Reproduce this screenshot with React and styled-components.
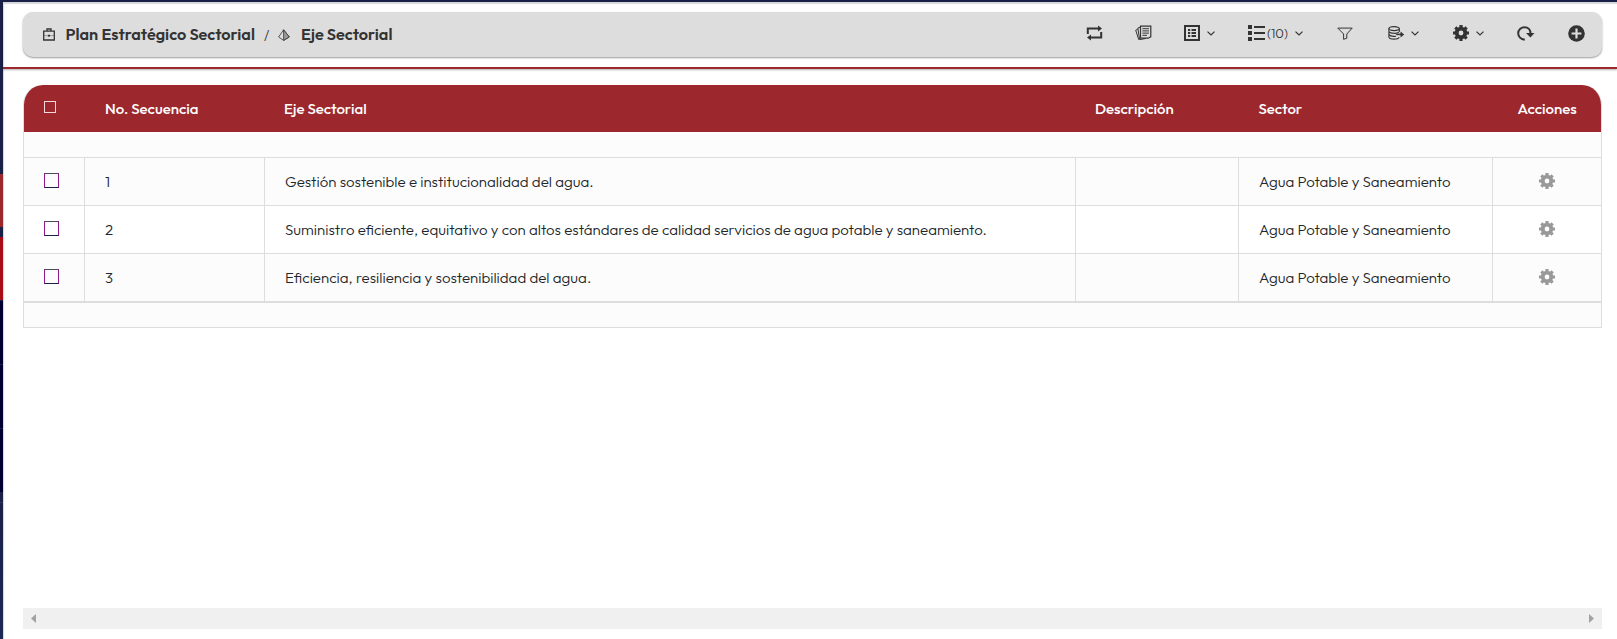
import React from "react";
import styled, { createGlobalStyle } from "styled-components";

const GlobalStyle = createGlobalStyle`
  *, *::before, *::after { box-sizing: border-box; }
  html, body { margin: 0; background: #fff; }
  body {
    font-family: Outfit, Lato, "Open Sans", sans-serif;
    font-size: 15px;
    font-weight: 300;
    color: #212529;
    overflow: hidden;
  }
`;

const Page = styled.div`
  display: grid;
  grid-template-columns: 3px 1fr;
  height: 639px;
`;

const Rail = styled.aside`
  display: flex;
  flex-direction: column;
`;

const RailBlock = styled.div`
  height: ${(p) => p.$height}px;
  background: ${(p) => p.$fill};
  border-bottom: ${(p) => (p.$line ? `1px solid ${p.$line}` : "none")};
`;

const Main = styled.main`
  display: flex;
  flex-direction: column;
  min-width: 0;
  border-top: 2px solid #1a2149;
  box-shadow: inset 1px 2px 1px #d6d6dc;
`;

const Header = styled.header`
  height: 67px;
  padding: 10px 15px 0 20px;
  border-bottom: 2px solid #9c272d;
  box-shadow: 0 1px 2px rgba(0, 0, 0, 0.3);
`;

const Toolbar = styled.div`
  display: flex;
  align-items: center;
  justify-content: space-between;
  height: 45px;
  padding: 0 17px 0 20px;
  border-radius: 10px;
  background: #ddd;
  box-shadow: 0 1px 2px rgba(0, 0, 0, 0.4);
`;

const Breadcrumb = styled.nav`
  display: flex;
  align-items: center;
  height: 45px;
  color: #333;
`;

const Crumb = styled.span`
  margin-left: ${(p) => p.$gap}px;
  padding-bottom: 2px;
  font-size: 16.25px;
  font-weight: 600;
  white-space: nowrap;
`;

const Slash = styled.span`
  width: 14px;
  margin-left: 9px;
  font-size: 14px;
  font-weight: 300;
`;

const Tools = styled.div`
  display: flex;
  align-items: center;
  height: 42px;
  align-self: flex-start;
`;

const Tool = styled.button`
  display: flex;
  align-items: center;
  height: 20px;
  margin: 0 0 0 ${(p) => p.$gap || 0}px;
  padding: 0;
  border: 0;
  background: none;
  color: #333;
  font: 300 13px Outfit, Lato, sans-serif;
`;

const Count = styled.span`
  width: 28px;
  padding-left: 2px;
  text-align: left;
`;

const Icon = styled.svg`
  display: block;
  flex: none;
  fill: none;
  stroke: currentColor;
`;

const Content = styled.section`
  display: flex;
  flex: 1;
  flex-direction: column;
  justify-content: space-between;
  padding: 16px 15px 10px 20px;
`;

const Table = styled.div`
  overflow: hidden;
  border: 1px solid #ddd;
  border-top: 0;
  border-radius: 20px 20px 0 0;
`;

const columns = "61px 180px 811px 163px 254px 1fr";

const HeadRow = styled.div`
  display: grid;
  grid-template-columns: ${columns};
  align-items: center;
  height: 48px;
  background: #9c272d;
  border-bottom: 1px solid #fff;
  color: #fff;
`;

const HeadCell = styled.div`
  padding-left: ${(p) => p.$pad ?? 20}px;
  font-weight: 500;
`;

const Spacer = styled.div`
  height: 24px;
  background: #fcfcfc;
`;

const Row = styled.div`
  display: grid;
  grid-template-columns: ${columns};
  height: 48px;
  border-top: 1px solid #ddd;
  background: ${(p) => (p.$striped ? "#fcfcfc" : "#fff")};
`;

const Cell = styled.div`
  display: flex;
  align-items: center;
  padding-left: 20px;
  border-right: 1px solid #ddd;
  font-size: 15.05px;
  white-space: nowrap;
  &:last-child {
    justify-content: center;
    padding: 0;
    border-right: 0;
  }
`;

const Footer = styled.div`
  height: 26px;
  border-top: 2px solid #ddd;
  background: #fcfcfc;
`;

const Check = styled.span`
  display: block;
  width: 15px;
  height: 15px;
  margin-top: -2px;
  border: 1px solid #8a1a8e;
  border-top-color: #4a4a58;
  border-bottom-color: #1a2149;
`;

const HeadCheck = styled.span`
  display: block;
  width: 12px;
  height: 12px;
  margin-top: -3px;
  border: 1px solid #f5d8dc;
`;

const ScrollBar = styled.div`
  display: flex;
  align-items: center;
  justify-content: space-between;
  height: 21px;
  padding: 0 8px;
  background: #f0f0f0;
  color: #a3a3a3;
`;

const Briefcase = () => (
  <Icon width="12" height="13" viewBox="0 0 12 13" strokeWidth="1.3">
    <path d="M.7 3.2H11.3V12H.7ZM4 3V1H8V3" />
    <path d="M1 7.6H4.5M7.5 7.6H11" strokeWidth=".4" />
    <rect x="4.8" y="6.8" width="2.4" height="1.8" fill="currentColor" stroke="none" />
  </Icon>
);

const Pyramid = () => (
  <Icon width="12" height="12" viewBox="0 0 12 12" strokeWidth="0.8" strokeLinejoin="round">
    <path d="M5.6.8.6 8 5.6 11.4 11.3 8Z" />
    <path d="M5.6.8V11.4L11.3 8Z" fill="#999" />
  </Icon>
);

const Swap = () => (
  <Icon width="17" height="16" viewBox="0 0 17 16" strokeWidth="2">
    <path d="M1.8 9V3.4H12.5M15.2 7V12.4H4.5" />
    <path d="M12 .4 16 3.4 12 6.4ZM5 9.4 1 12.4 5 15.4Z" fill="currentColor" stroke="none" />
  </Icon>
);

const Papers = () => (
  <Icon width="17" height="16" viewBox="0 0 17 16" strokeWidth="1">
    <path d="M5.5 1.2H15.8V11.8L13 13.2H5.5Z" strokeWidth="1.2" />
    <path d="M7.4 3.7H14M7.4 5.9H14M7.4 8.1H14M7.4 10.3H12" />
    <path d="M5 2.3 2.8 3 4.6 14.6 10.8 13.5M2.7 4.4.7 5.2 3.8 14.8" />
  </Icon>
);

const ListBox = () => (
  <Icon width="16" height="16" viewBox="0 0 16 16" strokeWidth="2">
    <rect x="1" y="1" width="14" height="14" />
    <path d="M4 5H6.2M7.5 5H12M4 8H6.2M7.5 8H12M4 11H6.2M7.5 11H12" strokeWidth="1.9" />
  </Icon>
);

const Lines = () => (
  <Icon width="17" height="16" viewBox="0 0 17 16" strokeWidth="2">
    <path d="M0 2H4M0 8H4M0 14H4" strokeWidth="4" />
    <path d="M6 2H17M6 8H17M6 14H17" />
  </Icon>
);

const Funnel = () => (
  <Icon width="16" height="13" viewBox="0 0 16 13" strokeWidth="1" strokeLinejoin="round">
    <path d="M.8 1.1H15.2L9.8 7V11.2L6.6 12.3V7Z" />
  </Icon>
);

const Database = () => (
  <Icon width="17" height="14" viewBox="0 0 17 14" strokeWidth="1.1">
    <ellipse cx="6.1" cy="2.6" rx="5.2" ry="2" />
    <path d="M.9 2.6V11.2C2 13.7 10 13.7 11.2 11.2M11.3 2.6V6M.9 5.5C2 7.8 9.5 7.9 11 6M.9 8.4C2 10.2 5 10.6 8 10.2" />
    <path d="M8.2 8.4H13" strokeWidth="1.5" />
    <path d="M12.5 5.4 16.2 8.4 12.5 11.4Z" fill="currentColor" stroke="none" />
  </Icon>
);

const Gear = ({ size = 16 }) => (
  <Icon width={size} height={size} viewBox="0 0 16 16">
    <circle cx="8" cy="8" r="4.3" strokeWidth="3.8" />
    {[0, 45, 90, 135].map((angle) => (
      <path
        key={angle}
        d="M8 0V3.5M8 12.5V16"
        strokeWidth="3.2"
        transform={`rotate(${angle} 8 8)`}
      />
    ))}
  </Icon>
);

const Reload = () => (
  <Icon width="18" height="15" viewBox="0 0 18 15" strokeWidth="2">
    <path d="M7.8 13.7C3.8 13.3 1.2 10.5 1.2 7.3 1.2 3.8 4 1.3 7.5 1.3 11.2 1.3 13.5 3.8 13.5 7.5" />
    <path d="M9 7H17.5L13.4 11.6Z" fill="currentColor" stroke="none" />
  </Icon>
);

const Plus = () => (
  <Icon width="17" height="17" viewBox="0 0 17 17">
    <circle cx="8.5" cy="8.5" r="8.3" fill="currentColor" stroke="none" />
    <path d="M8.5 3.6V13.4M3.6 8.5H13.4" stroke="#ddd" strokeWidth="2.2" />
  </Icon>
);

const ChevronIcon = styled(Icon)`
  margin-left: ${(p) => p.$gap}px;
`;

const Chevron = ({ gap = 6.5 }) => (
  <ChevronIcon $gap={gap} width="8" height="5" viewBox="0 0 8 5" strokeWidth="1.2">
    <path d="M.5.6 4 4 7.5.6" />
  </ChevronIcon>
);

const RowGear = styled.span`
  display: block;
  margin-top: -1px;
  color: #999;
`;

const Arrow = ({ flip }) => (
  <Icon width="5" height="9" viewBox="0 0 5 9">
    <path d={flip ? "M0 0 5 4.5 0 9Z" : "M5 0 0 4.5 5 9Z"} fill="currentColor" stroke="none" />
  </Icon>
);

const rail = [
  [174, "#1a2149"],
  [53, "#9c272d"],
  [10, "#1a2149"],
  [63, "#a80c17"],
  [1, "#1a2149"],
  [64, "#000033", "#1c2044"],
  [64, "#000033", "#1c2044"],
  [63, "#000033"],
  [11, "#1a2149", "#30365a"],
  [136, "linear-gradient(#1a2149, #1c2854)"],
];

const rows = [
  { id: 1, name: "Gestión sostenible e institucionalidad del agua." },
  {
    id: 2,
    name: "Suministro eficiente, equitativo y con altos estándares de calidad servicios de agua potable y saneamiento.",
  },
  { id: 3, name: "Eficiencia, resiliencia y sostenibilidad del agua." },
];

export default function App() {
  return (
    <>
      <GlobalStyle />
      <Page>
        <Rail>
          {rail.map(([height, fill, line], i) => (
            <RailBlock key={i} $height={height} $fill={fill} $line={line} />
          ))}
        </Rail>
        <Main>
          <Header>
            <Toolbar>
              <Breadcrumb>
                <Briefcase />
                <Crumb $gap={10.5}>Plan Estratégico Sectorial</Crumb>
                <Slash>/</Slash>
                <Pyramid />
                <Crumb $gap={11}>Eje Sectorial</Crumb>
              </Breadcrumb>
              <Tools>
                <Tool><Swap /></Tool>
                <Tool $gap={32}><Papers /></Tool>
                <Tool $gap={32}><ListBox /><Chevron /></Tool>
                <Tool $gap={33.5}><Lines /><Count>(10)</Count><Chevron gap={2} /></Tool>
                <Tool $gap={34}><Funnel /></Tool>
                <Tool $gap={35}><Database /><Chevron gap={6} /></Tool>
                <Tool $gap={34}><Gear /><Chevron gap={7} /></Tool>
                <Tool $gap={33}><Reload /></Tool>
                <Tool $gap={33}><Plus /></Tool>
              </Tools>
            </Toolbar>
          </Header>
          <Content>
            <Table>
              <HeadRow>
                <HeadCell><HeadCheck /></HeadCell>
                <HeadCell>No. Secuencia</HeadCell>
                <HeadCell $pad={19}>Eje Sectorial</HeadCell>
                <HeadCell $pad={19}>Descripción</HeadCell>
                <HeadCell $pad={19.5}>Sector</HeadCell>
                <HeadCell $pad={24.5}>Acciones</HeadCell>
              </HeadRow>
              <Spacer />
              {rows.map((row, i) => (
                <Row key={row.id} $striped={i % 2 === 0}>
                  <Cell><Check /></Cell>
                  <Cell>{row.id}</Cell>
                  <Cell>{row.name}</Cell>
                  <Cell />
                  <Cell>Agua Potable y Saneamiento</Cell>
                  <Cell><RowGear><Gear /></RowGear></Cell>
                </Row>
              ))}
              <Footer />
            </Table>
            <ScrollBar>
              <Arrow />
              <Arrow flip />
            </ScrollBar>
          </Content>
        </Main>
      </Page>
    </>
  );
}
